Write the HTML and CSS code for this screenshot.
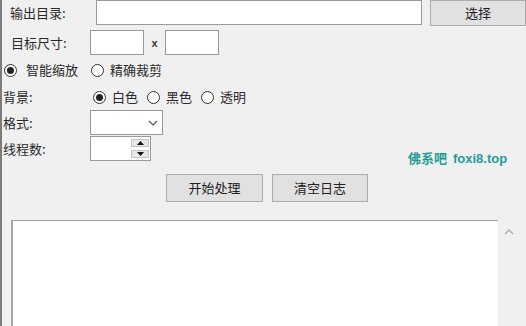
FILE: index.html
```html
<!DOCTYPE html>
<html lang="zh">
<head>
<meta charset="utf-8">
<link rel="stylesheet" href="styles.css">
</head>
<body>
<div class="win">
  <div class="row r1">
    <span class="lbl lbl-out">输出目录:</span>
    <div class="box box-out"></div>
    <div class="btn btn-pick">选择</div>
  </div>
  <div class="row r2">
    <span class="lbl lbl-size">目标尺寸:</span>
    <div class="box box-size"></div>
    <span class="times">x</span>
    <div class="box box-size"></div>
  </div>
  <div class="row r3">
    <span class="radio on first"></span><span class="rtext t-smart">智能缩放</span>
    <span class="radio"></span><span class="rtext">精确裁剪</span>
  </div>
  <div class="row r4">
    <span class="lbl lbl-bg">背景:</span>
    <span class="radio on"></span><span class="rtext rt-s">白色</span>
    <span class="radio"></span><span class="rtext rt-s">黑色</span>
    <span class="radio"></span><span class="rtext rt-s">透明</span>
  </div>
  <div class="row r5">
    <span class="lbl lbl-left">格式:</span>
    <div class="box combo">
      <svg class="chev" width="10" height="6" viewBox="0 0 10 6"><path d="M1 1 L5 5 L9 1" fill="none" stroke="#555" stroke-width="1.1"/></svg>
    </div>
  </div>
  <div class="row r6">
    <span class="lbl lbl-left">线程数:</span>
    <div class="box spin">
      <div class="spinbtns">
        <span class="sb"><svg width="7" height="4" viewBox="0 0 7 4"><path d="M0 4 L3.5 0 L7 4 Z" fill="#111"/></svg></span>
        <span class="sb"><svg width="7" height="4" viewBox="0 0 7 4"><path d="M0 0 L3.5 4 L7 0 Z" fill="#111"/></svg></span>
      </div>
    </div>
  </div>
  <div class="row r7">
    <div class="btn btn-start">开始处理</div>
    <div class="btn btn-clear">清空日志</div>
  </div>
  <div class="row r8">
    <div class="log"></div>
    <div class="scroll">
      <svg width="10" height="6" viewBox="0 0 10 6"><path d="M1 5 L5 1 L9 5" fill="none" stroke="#aaa" stroke-width="1.4"/></svg>
    </div>
  </div>
  <div class="mark">佛系吧 <span class="mark-url">foxi8.top</span></div>
</div>
</body>
</html>
```
FILE: styles.css
```css
* { box-sizing: border-box; }
html, body { margin: 0; padding: 0; background: #f0f0f0; }
body {
  font-family: "Noto Sans CJK SC", "Liberation Sans", sans-serif;
  font-size: 13px;
  color: #2a2a2a;
}
.win {
  position: relative;
  width: 526px;
  height: 326px;
  overflow: hidden;
  background: #f0f0f0;
  border-left: 2px solid #7c7c7c;
  display: flex;
  flex-direction: column;
}
.row { display: flex; align-items: center; flex: none; }
.lbl { line-height: 16px; white-space: nowrap; }
.box { background: #fff; border: 1px solid #9a9a9a; }
.btn {
  background: #e1e1e1;
  border: 1px solid #adadad;
  display: flex;
  align-items: center;
  justify-content: center;
  line-height: 16px;
  color: #222;
}

/* row 1 */
.r1 { height: 26px; align-items: flex-start; }
.lbl-out { width: 94px; padding-left: 8px; align-self: center; }
.box-out { width: 326px; height: 25px; }
.btn-pick { width: 96px; height: 26px; margin-left: 8px; }

/* row 2 */
.r2 { height: 25px; margin-top: 4px; }
.lbl-size { width: 88px; padding-left: 9px; }
.box-size { width: 54px; height: 25px; }
.times { width: 21px; text-align: center; font-family: "Liberation Sans", sans-serif; font-size: 11px; font-weight: bold; color: #333; }

/* radios */
.radio {
  width: 13px; height: 13px;
  border-radius: 50%;
  border: 1px solid #333;
  background: #fff;
  flex: none;
  display: flex; align-items: center; justify-content: center;
}
.radio.on::after {
  content: "";
  width: 7px; height: 7px; border-radius: 50%;
  background: #222;
}
.rtext { line-height: 16px; margin-left: 6px; margin-right: 9px; white-space: nowrap; }
.r3 { height: 20px; margin-top: 5px; }
.r3 .first { margin-left: 2px; }
.t-smart { margin-left: 9px; margin-right: 13px; }
.r4 { height: 20px; margin-top: 7px; }
.lbl-bg { width: 91px; padding-left: 1px; }
.rt-s { margin-left: 6px; margin-right: 9px; }

/* row 5 / 6 */
.lbl-left { width: 88px; padding-left: 1px; }
.r5 { height: 25px; margin-top: 3px; }
.combo { width: 73px; height: 25px; position: relative; display: flex; align-items: center; justify-content: flex-end; padding-right: 4px; }
.r6 { height: 25px; margin-top: 1px; }
.spin { width: 61px; height: 25px; display: flex; justify-content: flex-end; padding: 2px 0 2px 0; }
.spinbtns { display: flex; flex-direction: column; justify-content: space-between; width: 19px; margin-right: 0; }
.sb {
  height: 8px; width: 18px;
  background: #e6e6e6;
  border: 1px solid #c6c6c6;
  display: flex; align-items: center; justify-content: center;
}

/* row 7 */
.r7 { height: 28px; margin-top: 13px; }
.btn-start { width: 97px; height: 28px; margin-left: 164px; }
.btn-clear { width: 96px; height: 28px; margin-left: 9px; }

/* row 8 */
.r8 { flex: 1; margin-top: 18px; align-items: stretch; }
.log {
  width: 487px;
  margin-left: 9px;
  background: #fff;
  border-top: 1px solid #a0a0a0;
  border-left: 2px solid #a8a8a8;
}
.scroll {
  flex: 1;
  background: #f0f0f0;
  display: flex;
  justify-content: center;
  align-items: flex-start;
  padding-top: 9px;
  padding-right: 6px;
}

/* watermark */
.mark {
  position: absolute;
  left: 406px;
  top: 150px;
  font-size: 13px;
  line-height: 16px;
  font-weight: bold;
  color: #1f9d95;
  white-space: nowrap;
}
.mark-url { font-family: "Liberation Sans", sans-serif; margin-left: 3px; }
```
